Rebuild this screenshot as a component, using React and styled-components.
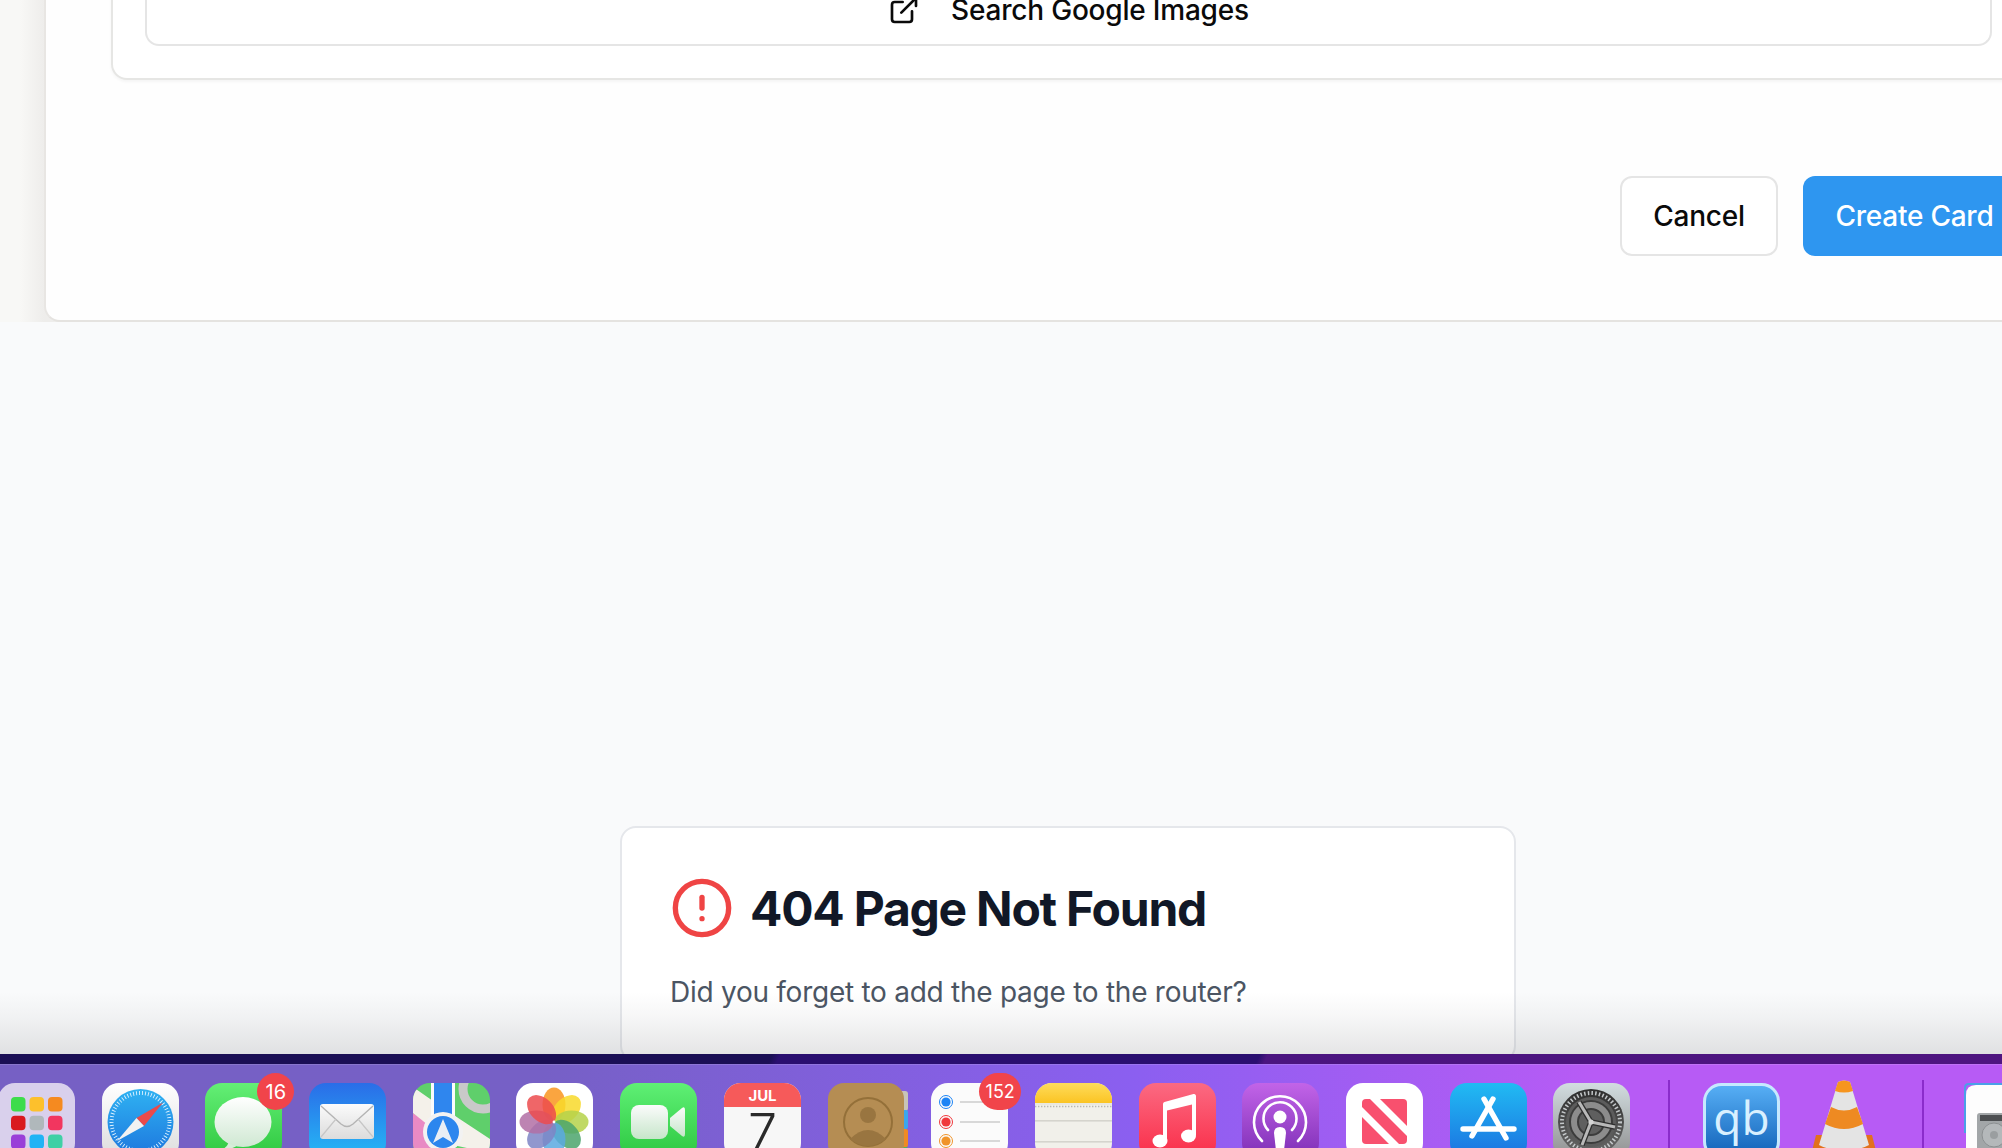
import React from "react";
import styled, { createGlobalStyle } from "styled-components";
import { ExternalLink, CircleAlert } from "lucide-react";

const GlobalStyle = createGlobalStyle`
  html, body {
    margin: 0;
    padding: 0;
    background: #f9fafb;
    overflow: hidden;
  }
  * { box-sizing: border-box; }
`;

const Screen = styled.div`
  width: 2002px;
  height: 1148px;
  display: flex;
  flex-direction: column;
  overflow: hidden;
  font-family: Inter, "Liberation Sans", sans-serif;
`;

const Page = styled.div`
  position: relative;
  height: 1054px;
  flex: none;
  overflow: hidden;
  background: #f9fafb;
`;

const Shell = styled.div`
  height: 322px;
  display: flex;
  overflow: hidden;
  background: linear-gradient(90deg, #f8f8f6 0, #f8f8f6 20px, #eeedeb 44px);
  padding-left: 44px;
`;

const MainCard = styled.div`
  flex: none;
  width: 2045px;
  height: 322px;
  display: flex;
  flex-direction: column;
  justify-content: flex-end;
  padding: 0 63px 64px 65px;
  background: #fefefe;
  border-left: 2px solid #e8e6e3;
  border-bottom: 2px solid #e5e3e0;
  border-bottom-left-radius: 16px;
`;

const OuterPanel = styled.div`
  padding: 0 32px 32px;
  background: #fff;
  border: 2px solid #e6e6e4;
  border-top: 0;
  border-bottom-left-radius: 16px;
  box-shadow: 0 2px 3px rgba(0, 0, 0, 0.04);
`;

const SearchBox = styled.div`
  height: 70px;
  display: flex;
  align-items: center;
  justify-content: center;
  gap: 31px;
  border: 2px solid #e5e5e5;
  border-top: 0;
  border-radius: 0 0 14px 14px;
  font-size: 28px;
  font-weight: 500;
  letter-spacing: -0.2px;
  color: #0a0a0a;
`;

const Actions = styled.div`
  display: flex;
  justify-content: flex-end;
  gap: 25px;
  margin-top: 96px;
`;

const Button = styled.div`
  width: ${(p) => (p.$primary ? "223px" : "158px")};
  height: 80px;
  display: flex;
  align-items: center;
  justify-content: center;
  border-radius: 12px;
  font-size: 28px;
  font-weight: 500;
  letter-spacing: -0.25px;
  color: ${(p) => (p.$primary ? "#fff" : "#0a0a0a")};
  background: ${(p) => (p.$primary ? "#2e96f0" : "#fff")};
  border: ${(p) => (p.$primary ? "0" : "2px solid #e5e5e5")};
`;

const NotFoundCard = styled.div`
  width: 896px;
  margin: 504px 0 0 620px;
  padding: 48px;
  background: #fff;
  border: 2px solid #e5e7eb;
  border-radius: 16px;
`;

const TitleRow = styled.div`
  display: flex;
  align-items: center;
  gap: 16px;
`;

const Title = styled.h1`
  margin: 1px 0 -1px;
  font-size: 48px;
  line-height: 64px;
  font-weight: 700;
  letter-spacing: -1.25px;
  color: #111827;
`;

const Message = styled.p`
  margin: 32px 0 0;
  font-size: 28px;
  line-height: 40px;
  letter-spacing: -0.26px;
  color: #4b5563;
`;

// the dock blurs whatever scrolls under it, this is just the grey fade
const DockFade = styled.div`
  position: absolute;
  left: 0;
  right: 0;
  bottom: 0;
  height: 62px;
  background: linear-gradient(
    180deg,
    rgba(110, 112, 116, 0) 0,
    rgba(110, 112, 116, 0.06) 40%,
    rgba(110, 112, 116, 0.18) 100%
  );
`;

const Wallpaper = styled.div`
  height: 10px;
  flex: none;
  background: linear-gradient(
    115deg,
    #1b0f55 0,
    #1b0f55 38.5%,
    #2a0f70 38.9%,
    #2a0f70 62.8%,
    #4b1580 63.2%,
    #4e1580 100%
  );
`;

const Dock = styled.div`
  flex: 1;
  display: flex;
  align-items: flex-start;
  gap: 26.7px;
  padding: 18px 0 0;
  margin-left: -2px;
  width: 2100px;
  overflow: hidden;
  border-top: 1px solid rgba(255, 255, 255, 0.14);
  background: linear-gradient(
    90deg,
    #7660c4 0,
    #7660c6 26%,
    #8b5ff0 54%,
    #b75bf5 76%,
    #b75bf5 100%
  );
`;

const DockItem = styled.div`
  position: relative;
  flex: none;
  width: 77px;
  height: 77px;
`;

const Badge = styled.span`
  position: absolute;
  top: -10px;
  right: ${(p) => (p.$wide ? "-13px" : "-12px")};
  min-width: ${(p) => (p.$wide ? "42px" : "37px")};
  height: 37px;
  display: flex;
  align-items: center;
  justify-content: center;
  border-radius: 19px;
  background: #f1444a;
  color: #fff;
  font-size: ${(p) => (p.$wide ? "18px" : "20px")};
`;

const DockDivider = styled.div`
  flex: none;
  width: 2px;
  height: 68px;
  margin: -3px ${(p) => p.$right}px 0 ${(p) => p.$left}px;
  background: #8a2ccb;
`;

const IconSvg = styled.svg`
  display: block;
  overflow: visible;
`;

const Icon = ({ children }) => (
  <IconSvg width="77" height="77" viewBox="0 0 77 77">
    {children}
  </IconSvg>
);

const Grad = ({ id, from, to }) => (
  <linearGradient id={id} x1="0" y1="0" x2="0" y2="1">
    <stop offset="0" stopColor={from} />
    <stop offset="1" stopColor={to} />
  </linearGradient>
);

const Launchpad = () => {
  const colors = ["#3ddc4b", "#fdc02c", "#f58a20", "#d9191f", "#b0b8bb", "#f2365f", "#9a3fd8", "#20b3f5", "#3fd0a5"];
  return (
    <Icon>
      <rect width="77" height="77" rx="17" fill="#d9d0ec" />
      {colors.map((c, i) => (
        <rect key={c} x={13 + (i % 3) * 18.5} y={14 + Math.floor(i / 3) * 18.7} width="14.5" height="14.5" rx="4" fill={c} />
      ))}
    </Icon>
  );
};

const Safari = () => (
  <Icon>
    <defs>
      <Grad id="saf" from="#2fb2f2" to="#1e78de" />
      <Grad id="safbg" from="#ffffff" to="#dcdcdc" />
    </defs>
    <rect width="77" height="77" rx="17" fill="url(#safbg)" />
    <circle cx="38.5" cy="39" r="33" fill="url(#saf)" />
    <circle cx="38.5" cy="39" r="29" fill="none" stroke="#dff2ff" strokeWidth="4" strokeDasharray="0.9 2.1" />
    <polygon points="61,19.5 34.5,35 42,43" fill="#ea4a4a" />
    <polygon points="15,58 34.5,35 42,43" fill="#f2f2f2" />
  </Icon>
);

const Messages = () => (
  <Icon>
    <defs>
      <Grad id="msg" from="#64ef76" to="#2cc63d" />
      <Grad id="bub" from="#ffffff" to="#cfe8d2" />
    </defs>
    <rect width="77" height="77" rx="17" fill="url(#msg)" />
    <path d="M18 66 C23 63 24 60 23 57 L33 62 C29 65 23 67 18 66 Z" fill="#d6edd8" />
    <ellipse cx="38" cy="39" rx="28.5" ry="25" fill="url(#bub)" />
  </Icon>
);

const Mail = () => (
  <Icon>
    <defs>
      <Grad id="mail" from="#2a6de8" to="#25bbf6" />
      <Grad id="env" from="#fbfbfb" to="#dcdcdc" />
    </defs>
    <rect width="77" height="77" rx="17" fill="url(#mail)" />
    <rect x="11" y="21" width="54" height="35" rx="3" fill="url(#env)" />
    <path d="M12 23 L32 41 Q38 46 44 41 L64 23" fill="none" stroke="#b4b4b4" strokeWidth="1.4" />
    <path d="M12 54 L27 36 M64 54 L49 36" fill="none" stroke="#c6c6c6" strokeWidth="1.2" />
  </Icon>
);

const Maps = () => (
  <Icon>
    <defs>
      <clipPath id="mapclip">
        <rect width="77" height="77" rx="17" />
      </clipPath>
    </defs>
    <g clipPath="url(#mapclip)">
      <rect width="77" height="77" fill="#5fcf6b" />
      <polygon points="0,30 21,44 21,77 0,77" fill="#e88ac4" />
      <polygon points="0,4 0,30 40,62 77,70 77,56 30,25" fill="#f4f1ea" />
      <rect x="18" y="0" width="24" height="77" fill="#fbfbfb" />
      <rect x="21" y="0" width="18" height="77" fill="#2f86ee" />
      <circle cx="70" cy="6" r="20" fill="none" stroke="#c9c9c9" strokeWidth="9" />
      <polygon points="50,66 62,77 44,77" fill="#f3c43b" />
      <circle cx="30" cy="49" r="20" fill="#f2f2f2" />
      <circle cx="30" cy="49" r="16" fill="#2c86ee" />
      <polygon points="30,36 40,60 30,54 20,60" fill="#e9eef5" />
    </g>
  </Icon>
);

const Photos = () => {
  const petals = ["#f9951f", "#f8d92a", "#b5d24a", "#4ba56c", "#5ba9e0", "#7e85c5", "#b26fa5", "#ec4b4d"];
  return (
    <Icon>
      <rect width="77" height="77" rx="17" fill="#fff" />
      {petals.map((c, i) => (
        <ellipse key={c} cx="38" cy="21.5" rx="11.5" ry="17" fill={c} fillOpacity="0.85" transform={`rotate(${i * 45} 38 39)`} />
      ))}
      <circle cx="38" cy="39" r="1.4" fill="#fff" />
    </Icon>
  );
};

const FaceTime = () => (
  <Icon>
    <defs>
      <Grad id="ft" from="#5ff075" to="#2bc63f" />
      <Grad id="cam" from="#fbfbfb" to="#c6e6ca" />
    </defs>
    <rect width="77" height="77" rx="17" fill="url(#ft)" />
    <rect x="11" y="22" width="37" height="34" rx="8" fill="url(#cam)" />
    <path d="M50 35 L62 25 Q65 23 65 27 L65 51 Q65 55 62 53 L50 43 Z" fill="url(#cam)" />
  </Icon>
);

const CalendarIcon = () => (
  <Icon>
    <defs>
      <clipPath id="calclip">
        <rect width="77" height="77" rx="17" />
      </clipPath>
    </defs>
    <g clipPath="url(#calclip)">
      <rect width="77" height="77" fill="#f7f7f7" />
      <rect width="77" height="24" fill="#f65a5a" />
    </g>
    <text x="38.5" y="18" textAnchor="middle" fontFamily="Inter, sans-serif" fontSize="15" fontWeight="700" fill="#fff">JUL</text>
    <text x="38.5" y="68" textAnchor="middle" fontFamily="Inter, sans-serif" fontSize="52" fontWeight="300" fill="#2a2a2a">7</text>
  </Icon>
);

const Contacts = () => (
  <Icon>
    <rect x="70" y="8" width="10" height="20" rx="3" fill="#c8c4b8" />
    <rect x="70" y="27" width="10" height="19" rx="2" fill="#3aa6ee" />
    <rect x="70" y="46" width="10" height="18" rx="2" fill="#ef8a23" />
    <rect x="70" y="64" width="10" height="13" rx="2" fill="#4dbb55" />
    <rect width="76" height="77" rx="16" fill="#b58d53" />
    <circle cx="40" cy="39" r="24" fill="none" stroke="#947039" strokeWidth="2" />
    <circle cx="40" cy="32" r="8" fill="#997540" />
    <path d="M22 56 Q40 38 58 56 Q40 70 22 56 Z" fill="#997540" />
  </Icon>
);

const Reminders = () => {
  const rows = [
    { y: 19, c: "#1c84f5" },
    { y: 39, c: "#f0383c" },
    { y: 58, c: "#f0942a" },
  ];
  return (
    <Icon>
      <rect width="77" height="77" rx="17" fill="#fbfbfb" />
      {rows.map((r) => (
        <g key={r.y}>
          <circle cx="15" cy={r.y} r="6.5" fill="none" stroke={r.c} strokeWidth="1" />
          <circle cx="15" cy={r.y} r="4.6" fill={r.c} />
          <rect x="29" y={r.y - 0.7} width="40" height="1.4" fill="#c9c9c9" />
        </g>
      ))}
    </Icon>
  );
};

const Notes = () => (
  <Icon>
    <defs>
      <clipPath id="noteclip">
        <rect width="77" height="77" rx="17" />
      </clipPath>
      <Grad id="notetop" from="#fedc5c" to="#fbc423" />
    </defs>
    <g clipPath="url(#noteclip)">
      <rect width="77" height="77" fill="#f1f0ea" />
      <rect width="77" height="20" fill="url(#notetop)" />
      <rect y="20" width="77" height="2" fill="#e9e8e0" />
      <line x1="0" y1="23.5" x2="77" y2="23.5" stroke="#b9b8b2" strokeWidth="1.5" strokeDasharray="1.4 1.6" />
      <rect y="37" width="77" height="1.6" fill="#d5d4cd" />
      <rect y="58" width="77" height="1.6" fill="#d5d4cd" />
    </g>
  </Icon>
);

const Music = () => (
  <Icon>
    <defs>
      <Grad id="mus" from="#fb6a82" to="#fa2b46" />
    </defs>
    <rect width="77" height="77" rx="17" fill="url(#mus)" />
    <path d="M26 59 L26 21 L55 13 L55 52" fill="none" stroke="#fff" strokeWidth="4" strokeLinejoin="round" />
    <polygon points="26,21 55,13 55,21 26,28" fill="#fff" />
    <ellipse cx="21" cy="58" rx="7.5" ry="6.5" fill="#fff" />
    <ellipse cx="49.5" cy="53" rx="7.5" ry="6.5" fill="#fff" />
  </Icon>
);

const Podcasts = () => (
  <Icon>
    <defs>
      <Grad id="pod" from="#c264e8" to="#7c2db5" />
    </defs>
    <rect width="77" height="77" rx="17" fill="url(#pod)" />
    <path d="M20 58 A26 26 0 1 1 56 58" fill="none" stroke="#fff" strokeWidth="2.6" strokeLinecap="round" />
    <path d="M26 47 A16.5 16.5 0 1 1 50 47" fill="none" stroke="#fff" strokeWidth="2.6" strokeLinecap="round" />
    <circle cx="38" cy="34" r="6.5" fill="#fff" />
    <path d="M32 50 Q32 44 38 44 Q44 44 44 50 L41.5 72 Q38 75 34.5 72 Z" fill="#fff" />
  </Icon>
);

const News = () => (
  <Icon>
    <defs>
      <clipPath id="newsclip">
        <rect x="16" y="16" width="45" height="45" rx="4" />
      </clipPath>
    </defs>
    <rect width="77" height="77" rx="17" fill="#fff" />
    <g clipPath="url(#newsclip)">
      <rect x="16" y="16" width="45" height="45" fill="#f8506e" />
      <polygon points="24,16 34,16 61,43 61,53" fill="#fff" />
      <polygon points="16,24 16,34 43,61 53,61" fill="#fff" />
    </g>
  </Icon>
);

const AppStore = () => (
  <Icon>
    <defs>
      <Grad id="app" from="#21bbf3" to="#1b6fe0" />
    </defs>
    <rect width="77" height="77" rx="17" fill="url(#app)" />
    <g stroke="#fff" strokeWidth="5.4" strokeLinecap="round" fill="none">
      <line x1="43" y1="16" x2="22" y2="53" />
      <line x1="34" y1="16" x2="56" y2="55" />
      <line x1="13" y1="46" x2="64" y2="46" />
    </g>
  </Icon>
);

const SystemSettings = () => (
  <Icon>
    <defs>
      <Grad id="set" from="#d2dde0" to="#8e8e8e" />
      <Grad id="setdisc" from="#2e2e2e" to="#6a6a6a" />
    </defs>
    <rect width="77" height="77" rx="17" fill="url(#set)" />
    <circle cx="38" cy="39" r="33" fill="url(#setdisc)" />
    <circle cx="38" cy="39" r="29" fill="none" stroke="#c4c8ca" strokeWidth="4" strokeDasharray="1.5 2.2" />
    <circle cx="38" cy="39" r="25" fill="#5c5c5c" />
    <circle cx="38" cy="39" r="22" fill="#3c3c3c" />
    <circle cx="38" cy="39" r="17" fill="none" stroke="#8c8c8c" strokeWidth="6" />
    <circle cx="38" cy="39" r="12" fill="#5f5f5f" />
    <g stroke="#2e2e2e" strokeWidth="5.5">
      <line x1="38" y1="39" x2="26" y2="19" />
      <line x1="38" y1="39" x2="62" y2="44" />
      <line x1="38" y1="39" x2="29" y2="62" />
    </g>
    <g stroke="#b9b9b9" strokeWidth="3">
      <line x1="38" y1="39" x2="26" y2="19" />
      <line x1="38" y1="39" x2="62" y2="44" />
      <line x1="38" y1="39" x2="29" y2="62" />
    </g>
    <circle cx="38" cy="39" r="2.6" fill="#d4d4d4" />
  </Icon>
);

const Qb = () => (
  <Icon>
    <defs>
      <Grad id="qb" from="#58b0f6" to="#0f5fb6" />
    </defs>
    <rect x="1.5" y="1.5" width="74" height="74" rx="17" fill="url(#qb)" stroke="#c6e9fe" strokeWidth="3" />
    <text x="38.5" y="52" textAnchor="middle" fontFamily="'Open Sans', sans-serif" fontSize="46" fill="#d9f0ff">qb</text>
  </Icon>
);

const Vlc = () => (
  <Icon>
    <path d="M5 72 L10 52 L66 52 L71 72 Q38 86 5 72 Z" fill="#e2711d" />
    <path d="M32 -1 Q38 -4 44 -1 L63 62 Q38 74 13 62 Z" fill="#e4e4e4" />
    <path d="M32 -1 Q38 -4 44 -1 L47 8 Q38 11 29 8 Z" fill="#f6951f" />
    <path d="M25 24 Q38 31 51 24 L57 41 Q38 51 19 41 Z" fill="#ee8a22" />
  </Icon>
);

const DiskDoc = () => (
  <Icon>
    <path d="M1 50 L1 5 Q1 1 5 1 L77 1" fill="none" stroke="#4aa0e8" strokeWidth="2" />
    <path d="M2 12 Q2 2 12 2 L77 2 L77 77 L2 77 Z" fill="#fdfdfd" />
    <rect x="13" y="30" width="64" height="47" rx="3" fill="#a2a6a8" />
    <rect x="16" y="32" width="50" height="6" fill="#4c4f51" />
    <circle cx="30" cy="52" r="12" fill="#b4b8ba" stroke="#8c9092" strokeWidth="1" />
    <circle cx="30" cy="52" r="4" fill="#9a9ea0" />
  </Icon>
);

const dockApps = [
  { key: "launchpad", Art: Launchpad },
  { key: "safari", Art: Safari },
  { key: "messages", Art: Messages, badge: "16" },
  { key: "mail", Art: Mail },
  { key: "maps", Art: Maps },
  { key: "photos", Art: Photos },
  { key: "facetime", Art: FaceTime },
  { key: "calendar", Art: CalendarIcon },
  { key: "contacts", Art: Contacts },
  { key: "reminders", Art: Reminders, badge: "152" },
  { key: "notes", Art: Notes },
  { key: "music", Art: Music },
  { key: "podcasts", Art: Podcasts },
  { key: "news", Art: News },
  { key: "appstore", Art: AppStore },
  { key: "settings", Art: SystemSettings },
];

export default function App() {
  return (
    <>
      <GlobalStyle />
      <Screen>
        <Page>
          <Shell>
            <MainCard>
              <OuterPanel>
                <SearchBox>
                  <ExternalLink size={32} strokeWidth={2} />
                  <span>Search Google Images</span>
                </SearchBox>
              </OuterPanel>
              <Actions>
                <Button>Cancel</Button>
                <Button $primary>Create Card</Button>
              </Actions>
            </MainCard>
          </Shell>
          <NotFoundCard>
            <TitleRow>
              <CircleAlert size={64} color="#ef4444" strokeWidth={2} />
              <Title>404 Page Not Found</Title>
            </TitleRow>
            <Message>Did you forget to add the page to the router?</Message>
          </NotFoundCard>
          <DockFade />
        </Page>
        <Wallpaper />
        <Dock>
          {dockApps.map(({ key, Art, badge }) => (
            <DockItem key={key}>
              <Art />
              {badge && <Badge $wide={badge.length > 2}>{badge}</Badge>}
            </DockItem>
          ))}
          <DockDivider $left={11} $right={6} />
          <DockItem>
            <Qb />
          </DockItem>
          <DockItem>
            <Vlc />
          </DockItem>
          <DockDivider $left={12} $right={13} />
          <DockItem>
            <DiskDoc />
          </DockItem>
        </Dock>
      </Screen>
    </>
  );
}
